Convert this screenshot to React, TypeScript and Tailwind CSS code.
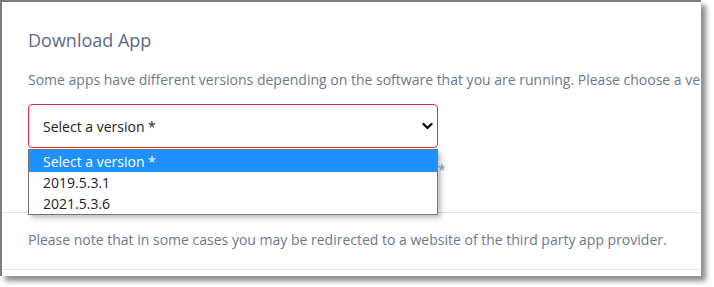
import React from "react"

const versions = ["Select a version *", "2019.5.3.1", "2021.5.3.6"]

function Chevron() {
  return (
    <svg width="11" height="8" viewBox="0 0 11 8" className="shrink-0">
      <polyline points="1.5,2 5.5,6 9.5,2" fill="none" stroke="#111" strokeWidth="2.4" strokeLinecap="round" strokeLinejoin="round" />
    </svg>
  )
}

export default function App() {
  return (
    <div className="w-[714px] h-[287px] bg-white font-['Open_Sans',sans-serif]">
      <div className="relative w-[701px] h-[276px] bg-white border-t-2 border-l-2 border-[#7d7d7d] shadow-[5px_5px_5px_rgba(0,0,0,0.45)] overflow-hidden">
        <div className="pl-[26px] pt-[26px] pb-[32px]">
          <h2 className="text-[18px] leading-[24px] text-[#5c6c82]">Download App</h2>
          <p className="mt-[18px] text-[14px] leading-[20px] text-[#6b798d] whitespace-nowrap">
            Some apps have different versions depending on the software that you are running. Please choose a version from the list below.
          </p>
          <div className="relative mt-[14px] w-[410px]">
            <div className="h-[44px] flex items-center justify-between pl-[14px] pr-[4px] border border-[#e0294f] rounded-[4px] bg-white">
              <span className="text-[14px] text-[#222]">Select a version *</span>
              <Chevron />
            </div>
            <div className="absolute left-0 top-[45px] w-[410px] z-10 bg-white border border-[#767676] shadow-[3px_3px_5px_rgba(0,0,0,0.25)]">
              {versions.map((v, i) => (
                <div
                  key={v}
                  className={`flex items-center pl-[14px] text-[14px] ${
                    i === 0 ? "h-[22px] bg-[#1e90ff] text-white" : "h-[21px] text-[#222]"
                  }`}
                >
                  {v}
                </div>
              ))}
            </div>
          </div>
          <div className="mt-[12px] h-[20px] pl-[410px] text-[14px] leading-[20px] text-[#8a96a6]">*</div>
        </div>
        <div className="border-t border-[#dde4ec] pl-[26px] pt-[17px] pb-[19px]">
          <p className="text-[14px] leading-[20px] text-[#6b798d] whitespace-nowrap">
            Please note that in some cases you may be redirected to a website of the third party app provider.
          </p>
        </div>
        <div className="border-t border-[#dde4ec]" />
      </div>
    </div>
  )
}
